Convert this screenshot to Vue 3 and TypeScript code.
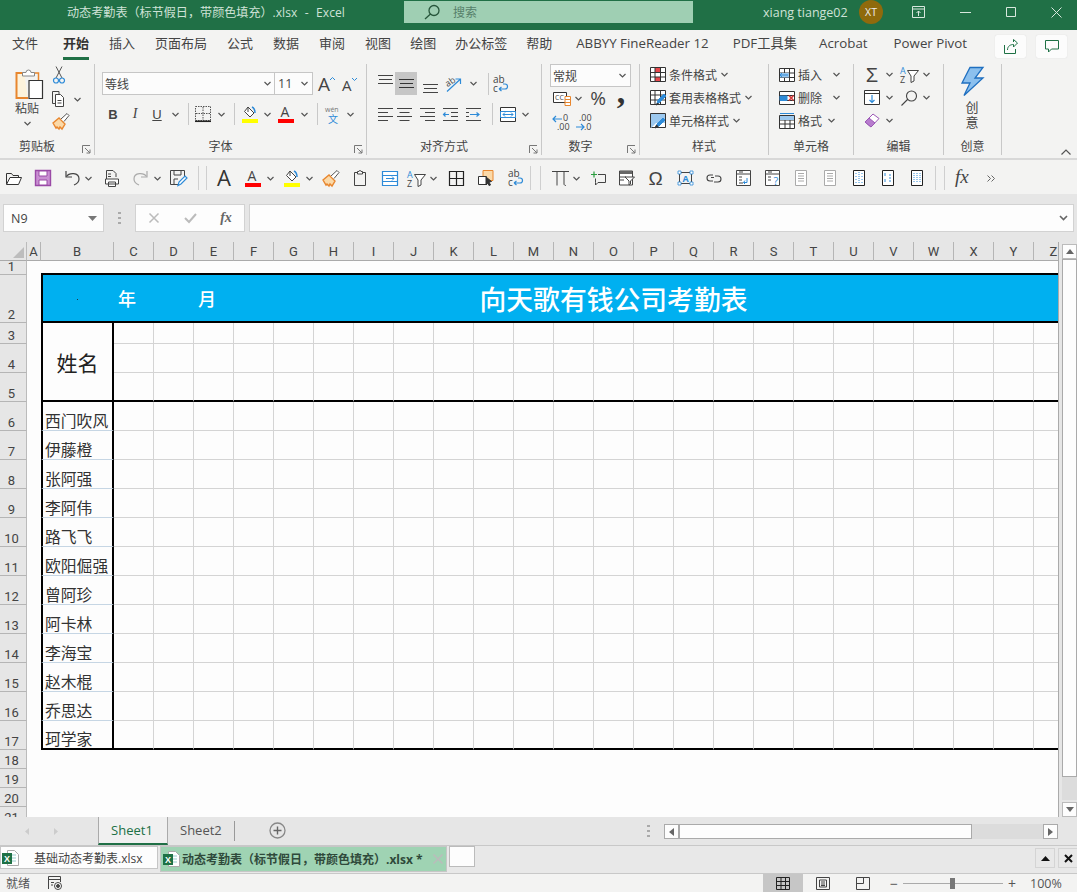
<script setup lang="ts">
import { h } from 'vue'

type Prim = { d?: string; s?: string; f?: string; w?: number; dash?: string; t?: string; x?: number; y?: number; z?: number; c?: string; b?: boolean; i?: boolean; rot?: string; fam?: string }
type Def = { w: number; h: number; p: Prim[] }

const D = '#444'
const B = '#2e8bd8'
const O = '#e8862e'
const p = (d: string, s = D, f = 'none', w = 1, dash?: string): Prim => ({ d, s, f, w, dash })
const t = (s: string, x: number, y: number, z: number, c = D, extra: Partial<Prim> = {}): Prim => ({ t: s, x, y, z, c, ...extra })
const box = (w: number, h: number, ex: Prim[], s = '#333') => ({ w, h, p: [p(`M.5.5h${w - 1}v${h - 1}H.5z`, s, '#fff'), ...ex] })

const icons: Record<string, Def> = {
  chev: { w: 7, h: 5, p: [p('M.5 1l3 3 3-3', '#555', 'none', 1.2)] },
  launch: { w: 9, h: 9, p: [p('M.5 8V.5H8', '#777'), p('M3 3l5 5M8 4.5V8H4.5', '#777')] },
  lens: { w: 16, h: 16, p: [p('M15 6.5a5 5 0 1 1-10 0 5 5 0 1 1 10 0zM6.5 10L1 15', '#27563b', 'none', 1.3)] },
  winbox: { w: 13, h: 12, p: [p('M.5.5h12v11H.5zM.5 3h12M6.5 10V5M4.5 7l2-2 2 2', '#d8e8de')] },
  winmin: { w: 11, h: 1, p: [p('M0 .5h11', '#d8e8de')] },
  winmax: { w: 10, h: 10, p: [p('M.5.5h9v9h-9z', '#d8e8de')] },
  winx: { w: 11, h: 11, p: [p('M.5.5l10 10M10.5.5l-10 10', '#d8e8de')] },
  share: { w: 14, h: 15, p: [p('M.5 6v8.5h11V10', '#1e7145'), p('M3.5 11c0-4 3-5.5 6-5.5V8L13.5 4 9.5.5V3', '#1e7145')] },
  comment: { w: 14, h: 13, p: [p('M.5.5h13v8.5H6.5L3.5 12V9h-3z', '#1e7145')] },
  paste: { w: 28, h: 31, p: [p('M9 5H1.5v25H13', O, '#fdf3dc', 2), p('M17 5h6.5v7', O, 'none', 1.5), p('M7.5 8V4.5h3.5a2.5 2.5 0 0 1 5 0h3.5V8z', '#888', '#fff'), p('M14 12.5h13.5v18H14z', '#333', '#fff', 1.2)] },
  cut: { w: 12, h: 18, p: [p('M3 12L9 .5M9 12L3 .5', '#555'), p('M5.5 14.5a2.5 2.5 0 1 1-5 0 2.5 2.5 0 1 1 5 0zM11.5 14.5a2.5 2.5 0 1 1-5 0 2.5 2.5 0 1 1 5 0z', B, 'none', 1.2)] },
  copy: { w: 12, h: 16, p: [p('M7 3V.5H.5v12h3'), p('M3.5 3.5h5l3 3v9h-8z', D, '#fff'), p('M5.5 9.5h4M5.5 12h4')] },
  brush: { w: 18, h: 17, p: [p('M1 10l6-5 6 6-3 5-2-2-1 2-2-2-1 1z', O, '#fbd9a8', 1.4), p('M9 6l6-5.5 2 2-5 6', '#555', '#fff')] },
  aup: { w: 18, h: 18, p: [t('A', 0, 16, 19, D, { fam: 'Open Sans' }), p('M12 5l2.5-2.5L17 5', B)] },
  adown: { w: 16, h: 18, p: [t('A', 0, 16, 15, D, { fam: 'Open Sans' }), p('M10 3l2.5 2.5L15 3', B)] },
  border: { w: 16, h: 16, p: [p('M.5.5h15v14H.5zM8 1v13M1 7.5h14', '#555', 'none', 1, '1.5 1'), p('M0 15.3h16', '#222', 'none', 1.5)] },
  fill: { w: 16, h: 18, p: [p('M6 2l6 6-4 4-5.5-5.5z', D, '#fff'), p('M6 2v5', D), p('M10 2c2 1 3 3 3 6', B, 'none', 1.5), p('M0 14h16v4H0z', 'none', '#ff0')] },
  fontc: { w: 16, h: 18, p: [t('A', 2.5, 12, 14, D, { fam: 'Open Sans' }), p('M0 14h16v4H0z', 'none', '#f00')] },
  wen: { w: 16, h: 17, p: [t('wén', 0, 6, 7, '#777', { fam: 'Open Sans' }), t('文', 3, 17, 10, B, { fam: 'Noto Sans CJK SC' })] },
  atop: { w: 15, h: 10, p: [p('M0 .5h15M1 4.5h13M0 8.5h15')] },
  amid: { w: 15, h: 10, p: [p('M0 .5h15M1 4.5h13M0 8.5h15', '#333')] },
  abot: { w: 15, h: 10, p: [p('M0 .5h15M1 4.5h13M0 8.5h15')] },
  orient: { w: 18, h: 16, p: [t('ab', 1, 9, 9, D, { rot: 'rotate(-35 6 6)', fam: 'Open Sans' }), p('M3 15.5L16 3.5M11.5 3h5v5', B, 'none', 1.2)] },
  wrap: { w: 16, h: 18, p: [t('ab', 1, 8, 10, D, { fam: 'Open Sans' }), t('c', 1, 17, 10, D, { fam: 'Open Sans' }), p('M7 14h6a2 2 0 0 0 0-5h-2M7 14l2.5-2M7 14l2.5 2', B, 'none', 1.2)] },
  left: { w: 15, h: 13, p: [p('M0 .5h15M0 4.5h10M0 8.5h15M0 12.5h10')] },
  center: { w: 15, h: 13, p: [p('M0 .5h15M2.5 4.5h10M0 8.5h15M2.5 12.5h10')] },
  right: { w: 15, h: 13, p: [p('M0 .5h15M5 4.5h10M0 8.5h15M5 12.5h10')] },
  inl: { w: 15, h: 13, p: [p('M0 .5h15M8 4.5h7M8 8.5h7M0 12.5h15'), p('M6 6.5H0M2.5 4.5l-2 2 2 2', B, 'none', 1.2)] },
  inr: { w: 15, h: 13, p: [p('M0 .5h15M0 4.5h3M0 8.5h3M0 12.5h15'), p('M4 6.5h9M10.5 4.5l2.5 2-2.5 2', B, 'none', 1.2)] },
  merge: { w: 16, h: 15, p: [p('M.5.5h15v14H.5z', '#333', '#fff'), p('M.5 4.5h15v6H.5z', B, '#fff'), p('M3 7.5h10M5 5.5l-2 2 2 2M11 5.5l2 2-2 2', B)] },
  acct: { w: 18, h: 15, p: [p('M.5 1.5h13v10H.5z', '#333', '#fff'), t('CC', 2, 9, 7, D, { fam: 'Open Sans' }), p('M12 5.5h5.5v9H12zM12 8.5h5.5M12 11.5h5.5', O, '#fff')] },
  dec: { w: 16, h: 17, p: [t('0', 10, 7, 9, D, { fam: 'Open Sans' }), t('.00', 4, 16, 9, D, { fam: 'Open Sans' }), p('M9 5H0M3 2L0 5l3 3', B, 'none', 1.2)] },
  inc: { w: 16, h: 17, p: [t('.00', 3, 7, 9, D, { fam: 'Open Sans' }), t('.0', 8, 16, 9, D, { fam: 'Open Sans' }), p('M0 13h8M5 10l3 3-3 3', B, 'none', 1.2)] },
  cond: box(16, 15, [p('M5 1h5v5H5zM5 10h5v4H5z', 'none', '#e8474c'), p('M.5 5.5h15M.5 10h15M5 1v13M10.5 1v13', '#333')]),
  tblf: box(16, 15, [p('M.5 5h15M.5 10h15M5 1v13M10.5 1v13', '#333'), p('M7 14l1-4 6-6 2 2-6 6z', B, B), p('M6 15l1.5-2 1 1z', '#333', '#333')]),
  cellst: box(16, 15, [p('M1 1h14v9H6l-5 5z', 'none', '#9cc8ee'), p('M6 14l1-3 6-6 2 2-6 6z', B, B), p('M5 15l1.5-3 1.5 1.5z', '#333', '#333')]),
  cins: box(16, 14, [p('M5.5 1v12M10.5 1v12M1 5h15M1 9.5h15', '#333'), p('M1 5h9v4.5H1z', 'none', '#9cc8ee'), p('M9 7H1M3 5L1 7l2 2', B)]),
  cdel: { w: 16, h: 14, p: [p('M.5.5h15v13H.5zM1 4.5h14M1 9.5h14', '#333', '#fff'), p('M1 5h7v4.5H1z', B, B), p('M10 4.5l4.5 5M14.5 4.5l-4.5 5', '#d43b3b', 'none', 1.6)] },
  cfmt: { w: 16, h: 16, p: [p('M.5 2.5h15V15.5H.5zM.5 7h15M.5 11h15M6 3v12M11 3v12', '#333', '#fff'), p('M1 3h14v4H1z', 'none', '#9cc8ee'), p('M1 .5h14', B)] },
  az: { w: 19, h: 17, p: [t('A', 0, 8, 9, B, { fam: 'Open Sans' }), t('Z', 0, 17, 9, D, { fam: 'Open Sans' }), p('M7.5 4.5h11L14 10v5l-3 1.5V10z', D, '#fff')] },
  filld: { w: 16, h: 15, p: [p('M.5.5h15v14H.5zM.5 3.5h15', '#333', '#fff'), p('M8 5v7.5M5.5 10L8 12.5 10.5 10', B, 'none', 1.2)] },
  search: { w: 16, h: 16, p: [p('M15.5 6a5 5 0 1 1-10 0 5 5 0 1 1 10 0zM6.5 9.5L.5 15.5', D, 'none', 1.1)] },
  eraser: { w: 16, h: 15, p: [p('M1 9l8-8 6 4.5-8 8.5z', '#9b57b5', '#fff'), p('M1 9l4-4 6 5-4 4z', '#9b57b5', '#b77cce')] },
  bolt: { w: 23, h: 29, p: [p('M9 .5h13L14 11h8L3 28.5 9 16H1z', '#1f6fc0', '#8cc0ee', 1.3)] },
  open: { w: 16, h: 13, p: [p('M.5 12V1.5h5l1.5 2h5.5v2', '#333'), p('M.5 12.5h12l3-7H4z', '#333', '#fff')] },
  save: { w: 16, h: 16, p: [p('M.5.5h15v15H.5z', '#9a4aa6', '#c98fd2', 1.4), p('M4 1h8v5H4zM4 10h8v5H4z', '#9a4aa6', '#fff')] },
  undo: { w: 15, h: 16, p: [p('M1 1v6h6', D, 'none', 1.2), p('M1.5 6.5C4 2.5 14 2 14 9c0 3-2.5 5-5 6', D, 'none', 1.2)] },
  print: { w: 14, h: 17, p: [p('M1.5 10V.5H8l3 3V7', D), p('M3 4h3M3 6.5h3'), p('M.5 9h13v5H.5zM3.5 12h7v4.5h-7z', D, '#fff')] },
  redo: { w: 15, h: 16, p: [p('M14 1v6H8', '#aaa', 'none', 1.2), p('M13.5 6.5C11 2.5 1 2 1 9c0 3 2.5 5 5 6', '#aaa', 'none', 1.2)] },
  saveas: { w: 17, h: 17, p: [p('M.5.5h14v9M.5.5v14h8', D), p('M4 1v4h7V1M4 14V9h4', D), p('M8 15.5l1-3.5 6-6 2 2-6 6z', B, '#fff', 1.2)] },
  abig: { w: 15, h: 17, p: [t('A', 0, 16, 22, '#333', { fam: 'Open Sans' })] },
  clip: { w: 12, h: 16, p: [p('M3.5 2.5H.5v13h11v-13h-3'), p('M3.5 4V1.5h1.5a1 1 0 0 1 2 0h1.5V4z', D, '#fff')] },
  split: { w: 16, h: 15, p: [p('M.5.5h15v14H.5zM.5 4.5h15M.5 10.5h15', B, '#fff', 1.2), p('M4 7.5h8M10 5.5l2 2-2 2', B)] },
  grid4: { w: 15, h: 15, p: [p('M.5.5h14v14H.5zM7.5 1v13M1 7.5h13', '#222', 'none', 1.2)] },
  select: { w: 16, h: 16, p: [p('M5 .5h10v10H5z', O, '#fbd9a8'), p('M.5 6.5h8v8H.5z', '#333', '#fff'), p('M8 7l5.5 4.5-2.5.5 1.5 3-1.5.5L9.5 13 8 15z', '#333', '#333')] },
  pi: { w: 17, h: 16, p: [p('M0 1.5h17M5 1.5v14M12 1.5v12.5c0 1 1 1.5 2 1.5', D, 'none', 1)] },
  addc: { w: 15, h: 15, p: [p('M7 3.5h7.5v8H7L4.5 14v-2.5V7.5', D), p('M3 .5v6M0 3.5h6', '#2a9d3f', 'none', 1.2)] },
  fbox: { w: 16, h: 16, p: [p('M.5 1h13v14H.5z', D, '#fff'), p('M1 1h12v3H1z', 'none', '#666'), p('M1 7h6M1 10h4'), p('M6 7h9.5l-4 4v3l-1.5 1v-4z', D, '#fff')] },
  omega: { w: 15, h: 16, p: [t('Ω', -.5, 15, 19, D, { fam: 'Liberation Sans' })] },
  abox: { w: 15, h: 14, p: [p('M1.5 1.5h12v11h-12z', D), t('A', 4.5, 10.5, 9, B, { fam: 'Open Sans', b: true }), p('M0 0h3v3H0zM12 0h3v3h-3zM0 11h3v3H0zM12 11h3v3h-3z', B, '#fff', .8)] },
  link: { w: 16, h: 10, p: [p('M7 2H4a3 3 0 0 0 0 6h3M5 4.5h3M9 3h3a3 3 0 0 1 0 6H8', D, 'none', 1.1)] },
  doc1: box(15, 16, [p('M.5 4h14', D), p('M3 2h4M3 7h3M3 10h3M3 13h4', D), p('M11 8v4.5H7.5M9 10.5l-1.5 2 1.5 1.5', B)], D),
  doc2: box(15, 16, [p('M.5 4h14', D), p('M3 2h4M3 7h3M3 10h3', D), t('?', 8.5, 15, 11, B, { fam: 'Open Sans' })], D),
  pgGray: box(12, 16, [p('M3 3.5h6M3 6h6M3 8.5h6M3 11h6', '#aaa')], '#aaa'),
  pg1: box(12, 16, [p('M6 2v12', B, 'none', 1, '1 1'), p('M3 3v10M9 3v10', B, 'none', 1, '1 2')], '#222'),
  pg2: box(12, 16, [p('M3 3v3M3 9v3M7 5h2M7 8h2M7 11h2', B)], '#222'),
  pg3: box(12, 16, [p('M3 3v10M6 3v10M9 3v10', B, 'none', 1, '1 1')], '#222'),
  fx: { w: 16, h: 16, p: [t('fx', 0, 13, 19, '#444', { fam: 'Liberation Serif', i: true })] },
  more: { w: 8, h: 7, p: [p('M.5.5l3 3-3 3M4.5.5l3 3-3 3', '#666')] },
  x: { w: 10, h: 10, p: [p('M.5.5l9 9M9.5.5l-9 9', '#bbb', 'none', 1.5)] },
  check: { w: 13, h: 10, p: [p('M1 5l4 4 7-8', '#bbb', 'none', 2)] },
  ddown: { w: 9, h: 5, p: [p('M0 0h9L4.5 5z', 'none', '#777')] },
  ddown2: { w: 9, h: 6, p: [p('M1 1l3.5 3.5L8 1', '#666', 'none', 1.6)] },
  triL: { w: 5, h: 8, p: [p('M5 0v8L0 4z', 'none', '#666')] },
  triR: { w: 5, h: 8, p: [p('M0 0v8l5-4z', 'none', '#666')] },
  triU: { w: 8, h: 5, p: [p('M0 5h8L4 0z', 'none', '#666')] },
  triD: { w: 8, h: 5, p: [p('M0 0h8L4 5z', 'none', '#666')] },
  arrowL: { w: 4, h: 7, p: [p('M4 0v7L0 3.5z', 'none', '#ccc')] },
  arrowR: { w: 4, h: 7, p: [p('M0 0v7l4-3.5z', 'none', '#ccc')] },
  plus: { w: 17, h: 17, p: [p('M16 8.5a7.5 7.5 0 1 1-15 0 7.5 7.5 0 1 1 15 0z', '#888', 'none', 1.3), p('M8.5 4.5v8M4.5 8.5h8', '#666', 'none', 1.4)] },
  xl: { w: 17, h: 16, p: [p('M5.5.5h7l4 4v11h-11z', '#aaa', '#fff'), p('M8 5h6M8 8h6M8 11h6', '#9cc'), p('M0 3h10v11H0z', 'none', '#1e7145'), t('X', 2, 12, 9, '#fff', { fam: 'Liberation Sans', b: true })] },
  camera: { w: 14, h: 14, p: [p('M.5 13V.5h12V6M.5 3.5h12', D), p('M3 6.5h3M3 9h2'), p('M13.5 10a3.5 3.5 0 1 1-7 0 3.5 3.5 0 1 1 7 0z', D, '#fff'), p('M11.5 10a1.5 1.5 0 1 1-3 0 1.5 1.5 0 1 1 3 0z', D, '#444')] },
  vnorm: { w: 14, h: 13, p: [p('M.5.5h13v12H.5zM5 1v11M9.5 1v11M1 4.5h12M1 8.5h12', '#222')] },
  vpage: { w: 14, h: 13, p: [p('M.5.5h13v12H.5z', D), p('M3.5 3h7v7h-7zM5 5h4M5 7h4M5 8.5h4', D)] },
  vbrk: { w: 14, h: 13, p: [p('M.5.5h13v12H.5zM.5 6.5h7V1', D)] },
  upb: { w: 9, h: 5, p: [p('M0 5h9L4.5 0z', 'none', '#111')] },
  xb: { w: 9, h: 9, p: [p('M1 1l7 7M8 1l-7 7', '#111', 'none', 2)] },
  collapse: { w: 10, h: 6, p: [p('M.5 5.5l4.5-4.5 4.5 4.5', '#555', 'none', 1.2)] },
}

const Ico = (props: { n: string }) => {
  const d = icons[props.n]
  return h('svg', { width: d.w, height: d.h, viewBox: `0 0 ${d.w} ${d.h}`, class: 'ico' }, d.p.map((e) =>
    e.t !== undefined
      ? h('text', { x: e.x, y: e.y, 'font-size': e.z, fill: e.c, 'font-family': e.fam ?? 'Open Sans', 'font-weight': e.b ? 700 : 400, 'font-style': e.i ? 'italic' : 'normal', transform: e.rot }, e.t)
      : h('path', { d: e.d, stroke: e.s, fill: e.f, 'stroke-width': e.w, 'stroke-dasharray': e.dash }),
  ))
}
Ico.props = ['n']

// ml is the extra gap on top of the 20px tab gap
const tabs = [
  { n: '文件', ml: 0 }, { n: '开始', on: true, ml: 5 }, { n: '插入', ml: 0 }, { n: '页面布局', ml: 0 }, { n: '公式', ml: 0 }, { n: '数据', ml: 0 }, { n: '审阅', ml: 0 }, { n: '视图', ml: 0 },
  { n: '绘图', ml: -1 }, { n: '办公标签', ml: -1 }, { n: '帮助', ml: -1 }, { n: 'ABBYY FineReader 12', ml: 4, lat: true }, { n: 'PDF工具集', ml: 4, lat: true }, { n: 'Acrobat', ml: 2, lat: true }, { n: 'Power Pivot', ml: 6, lat: true },
]

const styleRows = [['cond', '条件格式'], ['tblf', '套用表格格式'], ['cellst', '单元格样式']]

// Quick access bar: [icon, centre x]; gaps are derived from each icon's centre
const qatSrc: [string, number][] = [
  ['open', 14], ['save', 43], ['undo', 72], ['chev', 88], ['print', 112], ['redo', 140], ['chev', 157], ['saveas', 178], ['|', 198], ['|', 206],
  ['abig', 224], ['fontc', 253], ['chev', 270], ['fill', 292], ['chev', 309], ['brush', 331], ['clip', 360], ['split', 390], ['az', 416], ['chev', 433],
  ['grid4', 456], ['select', 486], ['wrap', 515], ['|', 530], ['|', 540], ['pi', 560], ['chev', 576], ['addc', 598], ['fbox', 627], ['omega', 656], ['abox', 685],
  ['link', 714], ['doc1', 743], ['doc2', 772], ['pgGray', 801], ['pgGray', 830], ['pg1', 859], ['pg2', 888], ['pg3', 917], ['|', 935], ['|', 944], ['fx', 963], ['more', 991],
]
let right = 0
const qat = qatSrc.map(([n, cx]) => {
  const w = n === '|' ? 1 : icons[n].w
  const left = cx - w / 2
  const ml = left - right
  right = left + w
  return { n, ml }
})

const letters = 'ABCDEFGHIJKLMNOPQRSTUVWXYZ'.split('')
const dataCols = letters.slice(2)
const names = ['西门吹风', '伊藤橙', '张阿强', '李阿伟', '路飞飞', '欧阳倔强', '曾阿珍', '阿卡林', '李海宝', '赵木棍', '乔思达', '珂学家']
const rowNums = Array.from({ length: 21 }, (_, i) => i + 1)
</script>

<template>
  <div class="app">
    <header class="title">
      <span class="doc">动态考勤表（标节假日，带颜色填充）.xlsx&nbsp;&nbsp;-&nbsp;&nbsp;Excel</span>
      <div class="search"><Ico n="lens" /><span>搜索</span></div>
      <span class="user">xiang tiange02</span>
      <span class="avatar">XT</span>
      <div class="winbtns"><Ico n="winbox" /><Ico n="winmin" /><Ico n="winmax" /><Ico n="winx" /></div>
    </header>

    <nav class="tabs">
      <span v-for="tb in tabs" :key="tb.n" class="tab" :class="{ on: tb.on, lat: tb.lat }" :style="{ marginLeft: tb.ml + 'px' }">{{ tb.n }}</span>
      <div class="tabbtns">
        <button class="tbtn"><Ico n="share" /></button>
        <button class="tbtn"><Ico n="comment" /></button>
      </div>
    </nav>

    <section class="ribbon">
      <div class="group g-clip">
        <div class="body clipbody">
          <div class="pastecol">
            <Ico n="paste" />
            <span class="lbl">粘贴</span>
            <Ico n="chev" />
          </div>
          <div class="cliptools">
            <Ico n="cut" />
            <div class="copyrow"><Ico n="copy" /><Ico n="chev" /></div>
            <Ico n="brush" />
          </div>
        </div>
        <div class="glabel withl">剪贴板<Ico class="launch" n="launch" /></div>
      </div>

      <div class="group g-font">
        <div class="body fontbody">
          <div class="fontrow">
            <div class="combo fname"><span>等线</span><Ico n="chev" /></div>
            <div class="combo fsize"><span>11</span><Ico n="chev" /></div>
            <Ico class="aup" n="aup" />
            <Ico class="adown" n="adown" />
          </div>
          <div class="fontrow2">
            <b class="tb">B</b><i class="ti">I</i><u class="tu">U</u><Ico n="chev" /><em class="vsep"></em>
            <Ico n="border" /><Ico n="chev" /><em class="vsep"></em>
            <Ico n="fill" /><Ico n="chev" />
            <Ico n="fontc" /><Ico n="chev" /><em class="vsep"></em>
            <Ico n="wen" /><Ico n="chev" />
          </div>
        </div>
        <div class="glabel withl">字体<Ico class="launch" n="launch" /></div>
      </div>

      <div class="group g-align">
        <div class="body alignbody">
          <div class="alrow1">
            <Ico class="up" n="atop" /><span class="sel"><Ico n="amid" /></span><Ico class="down" n="abot" />
            <Ico n="orient" /><Ico n="chev" /><em class="vsep tall"></em><Ico n="wrap" />
          </div>
          <div class="alrow2">
            <Ico n="left" /><Ico n="center" /><Ico n="right" /><Ico n="inl" /><Ico n="inr" /><em class="vsep tall"></em><Ico n="merge" /><Ico n="chev" />
          </div>
        </div>
        <div class="glabel withl">对齐方式<Ico class="launch" n="launch" /></div>
      </div>

      <div class="group g-num">
        <div class="body numbody">
          <div class="combo nfmt"><span>常规</span><Ico n="chev" /></div>
          <div class="numrow">
            <Ico n="acct" /><Ico n="chev" /><span class="pct">%</span><span class="comma">,</span>
          </div>
          <div class="numrow3"><Ico n="dec" /><Ico n="inc" /></div>
        </div>
        <div class="glabel withl">数字<Ico class="launch" n="launch" /></div>
      </div>

      <div class="group g-style">
        <div class="body listbody">
          <div v-for="s in styleRows" :key="s[0]" class="listrow"><Ico :n="s[0]" /><span>{{ s[1] }}</span><Ico n="chev" /></div>
        </div>
        <div class="glabel">样式</div>
      </div>

      <div class="group g-cell">
        <div class="body listbody">
          <div class="listrow cellrow"><Ico n="cins" /><span>插入</span><Ico n="chev" /></div>
          <div class="listrow cellrow"><Ico n="cdel" /><span>删除</span><Ico n="chev" /></div>
          <div class="listrow cellrow short"><Ico n="cfmt" /><span>格式</span><Ico n="chev" /></div>
        </div>
        <div class="glabel">单元格</div>
      </div>

      <div class="group g-edit">
        <div class="body editbody">
          <span class="sigma">Σ</span><Ico n="chev" /><Ico n="az" /><Ico n="chev" />
          <Ico n="filld" /><Ico n="chev" /><Ico n="search" /><Ico n="chev" />
          <Ico n="eraser" /><Ico n="chev" />
        </div>
        <div class="glabel">编辑</div>
      </div>

      <div class="group g-create">
        <div class="body createbody">
          <Ico n="bolt" />
          <span class="vtext">创<br />意</span>
        </div>
        <div class="glabel">创意</div>
      </div>
      <div class="collapse"><Ico n="collapse" /></div>
    </section>

    <section class="qat">
      <template v-for="(q, i) in qat" :key="i">
        <em v-if="q.n === '|'" class="qsep" :style="{ marginLeft: q.ml + 'px' }"></em>
        <span v-else class="qi" :style="{ marginLeft: q.ml + 'px' }"><Ico :n="q.n" /></span>
      </template>
    </section>

    <section class="formula">
      <div class="namebox"><span>N9</span><Ico n="ddown" /></div>
      <div class="dots"></div>
      <div class="fbtns"><Ico n="x" /><Ico n="check" /><span class="fxlabel">fx</span></div>
      <div class="finput"><Ico n="ddown2" /></div>
    </section>

    <section class="work">
      <div class="viewport">
        <div class="sheet">
          <div class="corner"><span></span></div>
          <div v-for="l in letters" :key="l" class="ch">{{ l }}</div>

          <template v-for="r in rowNums" :key="r">
            <div class="rh">{{ r }}</div>
            <template v-if="r === 1 || r > 17">
              <div v-for="l in letters" :key="l" class="blank"></div>
            </template>
            <template v-else-if="r === 2">
              <div class="blank"></div>
              <div class="band">
                <span class="yr">年</span>
                <span class="mo">月</span>
                <span class="heading">向天歌有钱公司考勤表</span>
                <i class="speck"></i>
              </div>
            </template>
            <template v-else-if="r <= 5">
              <div class="blank"></div>
              <div v-if="r === 3" class="namehead">姓名</div>
              <div v-for="c in dataCols" :key="c" class="cell" :class="{ heavy: r === 5 }"></div>
            </template>
            <template v-else>
              <div class="blank"></div>
              <div class="nm" :class="{ heavy: r === 17 }">{{ names[r - 6] }}</div>
              <div v-for="c in dataCols" :key="c" class="cell" :class="{ heavy: r === 17 }"></div>
            </template>
          </template>
        </div>
      </div>
      <div class="vscroll">
        <div class="sbtn"><Ico n="triU" /></div>
        <div class="vthumb"></div>
        <div class="vtrack"></div>
        <div class="sbtn"><Ico n="triD" /></div>
      </div>
    </section>

    <section class="sheetbar">
      <div class="arrows"><Ico n="arrowL" /><Ico n="arrowR" /></div>
      <div class="stab active">Sheet1</div>
      <div class="stab">Sheet2</div>
      <div class="addsheet"><Ico n="plus" /></div>
      <div class="hdots"></div>
      <div class="hscroll">
        <div class="hbtn"><Ico n="triL" /></div>
        <div class="hthumb"></div>
        <div class="htrack"></div>
        <div class="hbtn"><Ico n="triR" /></div>
      </div>
    </section>

    <section class="docbar">
      <div class="dtab"><Ico n="xl" /><span>基础动态考勤表.xlsx</span></div>
      <div class="dtab cur"><Ico n="xl" /><span>动态考勤表（标节假日，带颜色填充）.xlsx *</span><Ico class="dx" n="x" /></div>
      <div class="dnew"></div>
      <div class="dctl"><button><Ico n="upb" /></button><button><Ico n="xb" /></button></div>
    </section>

    <footer class="status">
      <span class="ready">就绪</span>
      <Ico n="camera" />
      <div class="views">
        <span class="view on"><Ico n="vnorm" /></span>
        <span class="view"><Ico n="vpage" /></span>
        <span class="view"><Ico n="vbrk" /></span>
      </div>
      <div class="zoom">
        <span class="zs">−</span>
        <div class="slider"><i></i></div>
        <span class="zs">+</span>
        <span class="pctz">100%</span>
      </div>
    </footer>
  </div>
</template>

<style>
html, body { margin: 0; padding: 0; background: #f3f3f3; }
</style>

<style scoped>
.app { width: 1077px; height: 892px; overflow: hidden; display: flex; flex-direction: column; background: #f3f3f2; color: #444; font: 12px "Open Sans", "Noto Sans CJK SC", sans-serif; }
.ico { display: block; flex: none; overflow: visible; }
em, i { font-style: normal; }
button { border: 0; padding: 0; margin: 0; background: none; }

.title { height: 30px; flex: none; background: #207046; display: flex; align-items: center; padding-bottom: 6px; box-sizing: border-box; color: #cfe2d7; position: relative; }
.doc { margin-left: 67px; width: 337px; font-size: 12.1px; white-space: nowrap; word-spacing: .6px; }
.search { width: 289px; height: 22px; background: #9fcfb3; display: flex; align-items: center; color: #56806a; font-size: 12px; }
.search .ico { margin-left: 20px; }
.search span { margin-left: 13px; }
.user { margin-left: 70px; font-size: 12.5px; width: 96px; white-space: nowrap; }
.avatar { width: 24px; height: 24px; border-radius: 50%; background: #8f6a0c; color: #eee; font-size: 10.5px; display: flex; align-items: center; justify-content: center; }
.winbtns { display: flex; align-items: center; margin-left: 29px; gap: 35px; }

.tabs { height: 30px; flex: none; display: flex; align-items: center; padding-left: 12px; gap: 20px; font-size: 13px; box-sizing: border-box; color: #444; }
.tab { line-height: 27px; white-space: nowrap; border-bottom: 3px solid transparent; }
.tab.lat { font-size: 13.3px; }
.tab.on { font-weight: 700; border-bottom-color: #207046; color: #333; }
.tabbtns { margin-left: auto; display: flex; gap: 10px; margin-right: 10px; margin-top: 2px; }
.tbtn { width: 31px; height: 23px; background: #fcfcfc; border-radius: 2px; display: flex; align-items: center; justify-content: center; box-shadow: 0 0 1px #ccc; }

.ribbon { height: 98px; flex: none; display: flex; padding-top: 4px; box-sizing: border-box; padding-bottom: 3px; position: relative; }
.group { display: flex; flex-direction: column; box-sizing: border-box; border-right: 1px solid #c8c8c8; flex: none; }
.body { height: 75px; box-sizing: border-box; }
.glabel { height: 16px; line-height: 16px; text-align: center; font-size: 12px; position: relative; padding-top: 1px; }
.glabel.withl { padding-right: 20px; }
.launch { position: absolute; right: 3px; top: 7px; }
.lbl { font-size: 12px; line-height: 15px; }
.g-clip { width: 95px; } .g-font { width: 272px; } .g-align { width: 175px; } .g-num { width: 98px; }
.g-style { width: 129px; } .g-cell { width: 85px; } .g-edit { width: 90px; } .g-create { width: 58px; }

.clipbody { display: flex; padding-top: 4px; }
.pastecol { width: 52px; padding-left: 15px; box-sizing: border-box; display: flex; flex-direction: column; align-items: flex-start; }
.pastecol .lbl { margin-top: 2px; }
.pastecol .lbl + .ico { margin: 5px 0 0 9px; }
.cliptools { display: flex; flex-direction: column; align-items: flex-start; }
.cliptools > .ico:first-child { margin: -2px 0 0 1px; }
.copyrow { display: flex; align-items: center; gap: 10px; margin-top: 7px; }
.cliptools > .ico:last-child { margin: 6px 0 0 0; }

.fontbody { padding: 8px 0 0 7px; }
.fontrow { display: flex; align-items: center; }
.combo { background: #fcfcfc; border: 1px solid #c6c6c6; box-sizing: border-box; display: flex; align-items: center; justify-content: space-between; }
.fname { width: 173px; height: 23px; padding: 0 3px 0 2px; font-size: 12px; }
.fsize { width: 39px; height: 23px; padding: 0 4px 0 3px; font-size: 12.5px; margin-left: -1px; }
.aup { margin-left: 5px; } .adown { margin-left: 6px; }
.fontrow2 { display: grid; grid-template-columns: 22px 22px 22px 14px 12px 18px 18px 8px 24px 10px 28px 8px 18px 14px 20px; justify-items: center; align-items: center; height: 22px; margin-top: 8px; }
.tb, .ti, .tu { font-size: 13px; color: #444; font-family: "Liberation Sans", sans-serif; }
.ti { font-style: italic; font-family: "Liberation Serif", serif; font-size: 14px; }
.vsep { display: block; width: 1px; height: 22px; background: #c8c8c8; }

.alignbody { padding: 8px 0 0 11px; }
.alrow1 { display: grid; grid-template-columns: 15px 26px 22px 24px 16px 14px 9px 24px; justify-items: center; align-items: center; height: 23px; }
.sel { width: 22px; height: 23px; background: #c6c6c6; display: flex; align-items: center; justify-content: center; }
.up { align-self: start; margin-top: 3px; } .down { align-self: end; margin-bottom: 1px; }
.alrow2 { display: grid; grid-template-columns: 15px 23px 22px 24px 22px 16px 15px 20px; justify-items: center; align-items: center; height: 22px; margin-top: 8px; }

.numbody { padding: 0 0 0 8px; }
.nfmt { width: 81px; height: 23px; padding: 0 4px 0 2px; }
.numrow { display: grid; grid-template-columns: 18px 14px 26px 20px; justify-items: center; align-items: center; margin: 0 0 0 3px; height: 23px; }
.pct { font-size: 19px; line-height: 23px; }
.comma { font: 700 34px/23px "Liberation Serif", serif; height: 23px; margin-top: -14px; color: #333; }
.numrow3 { display: flex; gap: 7px; margin: 4px 0 0 3px; }

.listbody { display: flex; flex-direction: column; padding: 0 0 0 10px; margin-top: -1px; }
.listrow { display: flex; align-items: center; height: 23px; gap: 3px; font-size: 12px; }
.listrow .ico:last-child { margin-left: 1px; }
.cellrow span { width: 26px; }
.cellrow .ico:last-child { margin-left: 6px; }
.cellrow.short .ico:last-child { margin-left: 1px; }

.editbody { display: grid; grid-template-columns: 20px 14px 26px 8px; grid-auto-rows: 23px; justify-items: center; align-items: center; padding-left: 8px; margin-top: -1px; }
.sigma { font-size: 20px; font-family: "Liberation Sans", sans-serif; line-height: 1; }

.createbody { display: flex; flex-direction: column; align-items: center; padding: 3px 0 0 0; margin-right: 1px; }
.createbody .vtext { font-size: 13px; line-height: 15px; text-align: center; margin-top: 4px; }
.collapse { position: absolute; right: 6px; bottom: 3px; }

.qat { height: 36px; flex: none; box-sizing: border-box; border-top: 2px solid #d8d8d8; padding-top: 2px; display: flex; align-items: center; background: #f3f3f2; }
.qi { display: block; flex: none; }
.qsep { display: block; flex: none; width: 1px; height: 24px; background: #cfcfcf; }

.formula { height: 48px; flex: none; background: #e6e6e6; display: flex; align-items: flex-start; padding-top: 10px; box-sizing: border-box; }
.namebox { width: 101px; height: 28px; margin-left: 3px; background: #fdfdfd; border: 1px solid #d2d2d2; box-sizing: border-box; display: flex; align-items: center; justify-content: space-between; padding: 0 6px 0 7px; font-size: 12.5px; }
.dots { width: 3px; height: 12px; margin: 8px 14px 0 14px; background: repeating-linear-gradient(#aaa 0 2px, transparent 2px 5px); }
.fbtns { width: 110px; height: 28px; background: #fdfdfd; border: 1px solid #d2d2d2; box-sizing: border-box; display: grid; grid-template-columns: 36px 36px 36px; justify-items: center; align-items: center; }
.fxlabel { font: italic 700 14px "Liberation Serif", serif; color: #666; }
.finput { width: 825px; margin-left: 4px; height: 28px; background: #fdfdfd; border: 1px solid #d2d2d2; box-sizing: border-box; display: flex; align-items: center; justify-content: flex-end; padding-right: 5px; }

.work { height: 575px; flex: none; display: flex; background: #e6e6e6; }
.viewport { width: 1058px; height: 575px; overflow: hidden; flex: none; border-right: 1px solid #aaa; border-bottom: 1px solid #aaa; margin-bottom: -1px; }
.sheet { display: grid; width: 1074px; grid-template-columns: 27px 14px 73px repeat(24, 40px); grid-template-rows: 19px 14px 48px 21px 29px 29px repeat(12, 29px) repeat(4, 19px); background: #fdfdfd; font-family: "Roboto", sans-serif; }
.corner { background: #e6e6e6; border-bottom: 1px solid #aaa; border-right: 1px solid #bbb; box-sizing: border-box; position: relative; }
.corner span { position: absolute; right: 2px; bottom: 2px; border-style: solid; border-width: 0 0 11px 11px; border-color: transparent transparent #bdbdbd transparent; }
.ch { background: #e6e6e6; border-bottom: 1px solid #aaa; border-right: 1px solid #b5b5b5; box-sizing: border-box; text-align: center; font-size: 13px; line-height: 20px; color: #444; }
.rh { background: #e6e6e6; border-bottom: 1px solid #b5b5b5; border-right: 1px solid #bbb; box-sizing: border-box; display: flex; align-items: flex-end; justify-content: center; font-size: 13px; line-height: 15px; color: #444; padding-right: 3px; }
.blank { background: #fdfdfd; }
.band { grid-column: 3 / -1; display: grid; grid-template-columns: 73px 40px 40px 40px 1fr; align-items: center; background: #00b0f0; color: #fff; border: 2px solid #000; border-right: 0; box-sizing: border-box; position: relative; margin-top: -2px; height: 50px; font-family: "Noto Sans CJK SC", sans-serif; }
.yr { grid-column: 2; grid-row: 1; font-size: 18px; font-weight: 500; margin-left: 2px; }
.mo { grid-column: 4; grid-row: 1; font-size: 18px; font-weight: 500; margin-left: 2px; }
.heading { grid-column: 3 / -1; grid-row: 1; text-align: center; font-size: 26.8px; font-weight: 500; padding-right: 3px; }
.speck { position: absolute; left: 34px; top: 24px; width: 1px; height: 1px; background: #234; }
.namehead { grid-row: span 3; display: flex; align-items: center; justify-content: center; font: 21px "Noto Sans CJK SC", sans-serif; color: #222; border-left: 2px solid #000; border-right: 2px solid #000; border-bottom: 2px solid #000; box-sizing: border-box; }
.cell { border-right: 1px solid #d4d4d4; border-bottom: 1px solid #d4d4d4; box-sizing: border-box; }
.cell.heavy, .nm.heavy { border-bottom: 2px solid #000; }
.nm { border-left: 2px solid #000; border-right: 2px solid #000; border-bottom: 1px solid #c6d6e4; box-sizing: border-box; font: 15.8px/19px "Noto Sans CJK SC", sans-serif; color: #333; padding-left: 2px; white-space: nowrap; display: flex; align-items: flex-end; }

.vscroll { width: 15px; margin-left: 3px; display: flex; flex-direction: column; flex: none; }
.sbtn { height: 15px; flex: none; background: #fdfdfd; border: 1px solid #bbb; box-sizing: border-box; display: flex; align-items: center; justify-content: center; margin-top: 2px; }
.vthumb { height: 518px; background: #fdfdfd; border: 1px solid #aaa; box-sizing: border-box; flex: none; }
.vtrack { flex: 1; background: #dcdcdc; }

.sheetbar { height: 28px; flex: none; background: #e6e6e6; display: flex; box-sizing: border-box; position: relative; }
.arrows { width: 98px; display: flex; gap: 25px; padding: 11px 0 0 25px; box-sizing: border-box; }
.stab { height: 28px; line-height: 26px; font-size: 13px; color: #555; box-sizing: border-box; }
.stab.active { width: 70px; padding-right: 2px; text-align: center; color: #207046; border: 1px solid #aaa; border-top: 0; border-bottom: 2.5px solid #207046; background: #f0f0f0; }
.stab:not(.active) { width: 68px; padding-left: 12px; position: relative; }
.stab:not(.active)::after { content: ""; position: absolute; right: 1px; top: 4px; height: 20px; width: 1px; background: #999; }
.addsheet { margin: 5px 0 0 33px; }
.hdots { width: 3px; height: 12px; margin: 8px 0 0 361px; background: repeating-linear-gradient(#aaa 0 2px, transparent 2px 5px); }
.hscroll { display: flex; margin: 7px 0 0 14px; height: 15px; width: 394px; }
.hbtn { width: 15px; height: 15px; background: #fdfdfd; border: 1px solid #aaa; box-sizing: border-box; display: flex; align-items: center; justify-content: center; flex: none; }
.hthumb { width: 293px; background: #fdfdfd; border: 1px solid #aaa; box-sizing: border-box; }
.htrack { flex: 1; background: #dcdcdc; }

.docbar { height: 29px; flex: none; background: #e8e8e8; border-top: 1px solid #c8c8c8; border-bottom: 1px solid #c8c8c8; box-sizing: border-box; display: flex; align-items: flex-start; gap: 2px; }
.dtab { height: 23px; background: #fdfdfd; border: 1px solid #c6c6c6; box-sizing: border-box; display: flex; align-items: center; width: 158px; font-size: 12px; color: #444; }
.dtab .ico:first-child { margin: 0 0 0 1px; }
.dtab span { margin-left: 15px; white-space: nowrap; }
.dtab.cur { width: 287px; height: 26px; background: #9fd3b3; font-weight: 700; color: #2f4a3b; }
.dtab.cur .ico:first-child { margin-left: 2px; }
.dtab.cur span { margin-left: 2px; }
.dx { margin-left: 10px; }
.dnew { width: 26px; height: 21px; background: #fdfdfd; border: 1px solid #bbb; box-sizing: border-box; }
.dctl { margin-left: auto; display: flex; gap: 3px; margin-top: 2px; margin-right: -1px; }
.dctl button { width: 20px; height: 20px; border: 1px solid #d4d4d4; box-sizing: border-box; display: flex; align-items: center; justify-content: center; }

.status { height: 18px; flex: none; display: flex; align-items: center; background: #f3f3f2; position: relative; }
.ready { margin-left: 6px; font-size: 12px; color: #555; }
.status > .ico { margin-left: 18px; }
.views { display: flex; margin-left: 701px; height: 18px; }
.view { width: 40px; height: 18px; display: flex; align-items: center; justify-content: center; }
.view.on { background: #c6c6c6; }
.zoom { display: flex; align-items: center; margin-left: 4px; }
.zs { width: 14px; text-align: center; font-size: 14px; color: #555; }
.slider { width: 100px; height: 1px; background: #aaa; position: relative; margin: 0 2px; }
.slider i { position: absolute; left: 47px; top: -5px; width: 5px; height: 11px; background: #777; }
.pctz { margin-left: 11px; font-size: 12.5px; color: #555; }
</style>
